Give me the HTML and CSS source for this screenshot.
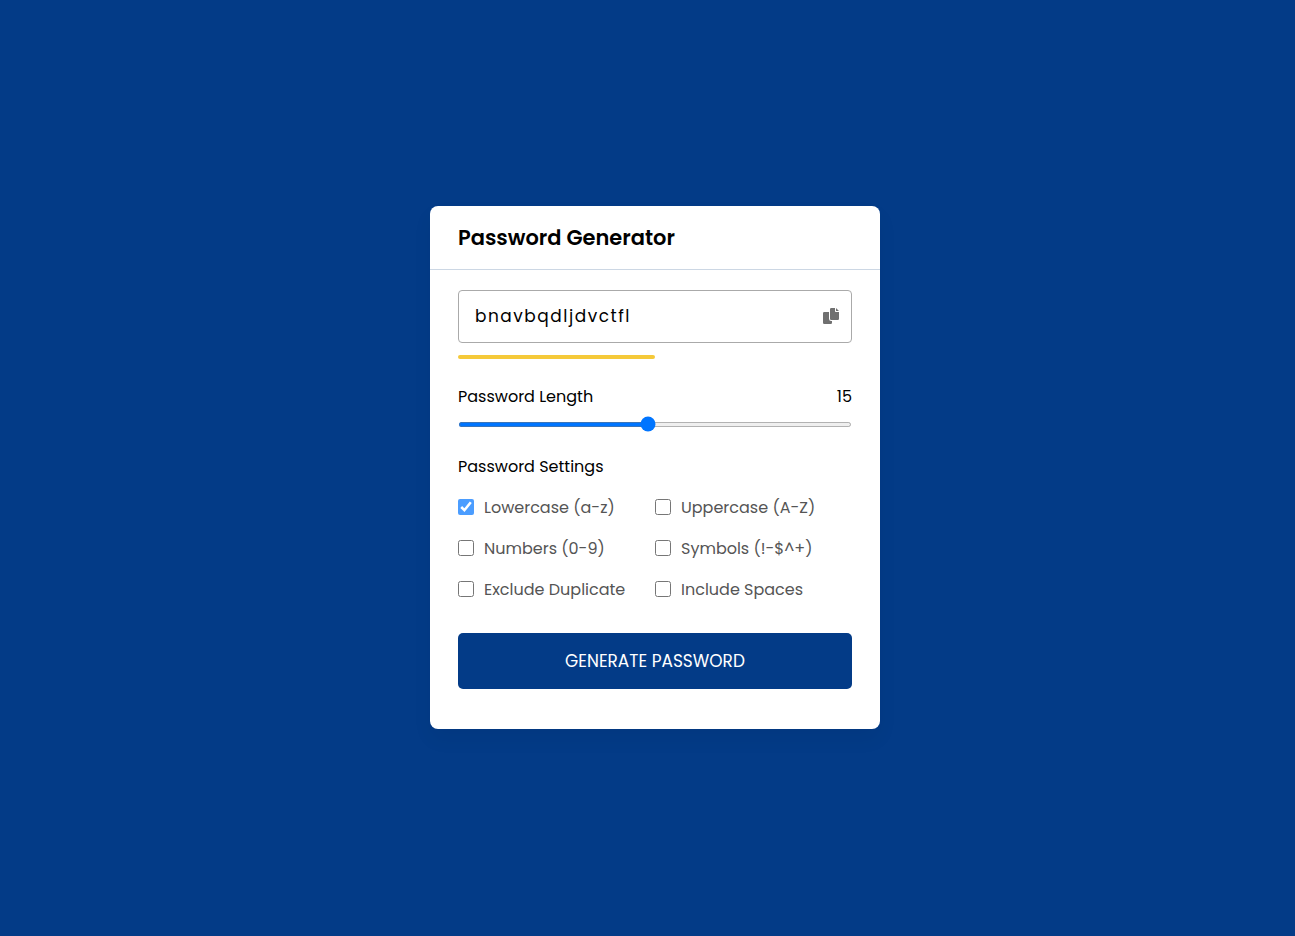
FILE: index.html
```html
<!DOCTYPE html>
<html lang="en">
<head>
<meta charset="utf-8">
<title>Password Generator</title>
<link rel="stylesheet" href="styles.css">
</head>
<body>
<main class="card">
  <h2 class="title">Password Generator</h2>
  <div class="wrapper">
    <div class="input-box">
      <span class="password">bnavbqdljdvctfl</span>
      <svg class="copy" viewBox="0 0 16 16" width="16" height="16" fill="#707070"><path d="M8.200 0H12v3.200a.8.8 0 0 0 .8.8H16v6.800a1.200 1.200 0 0 1-1.200 1.200H8.200A1.200 1.200 0 0 1 7 10.800V1.200A1.200 1.200 0 0 1 8.200 0zM13 0l3 3h-3zM1.200 4H6v6.800A2.200 2.200 0 0 0 8.200 13H9v1.800A1.200 1.200 0 0 1 7.800 16H1.200A1.200 1.200 0 0 1 0 14.800V5.200A1.200 1.200 0 0 1 1.200 4z"/></svg>
    </div>
    <div class="indicator"></div>
    <div class="details"><span class="label">Password Length</span><span class="label">15</span></div>
    <input class="range" type="range" min="1" max="30" value="15">
    <div class="settings"><span class="label">Password Settings</span></div>
    <div class="options">
      <label class="option"><input class="check locked" type="checkbox" checked><span>Lowercase (a-z)</span></label>
      <label class="option"><input class="check" type="checkbox"><span>Uppercase (A-Z)</span></label>
      <label class="option"><input class="check" type="checkbox"><span>Numbers (0-9)</span></label>
      <label class="option"><input class="check" type="checkbox"><span>Symbols (!-$^+)</span></label>
      <label class="option"><input class="check" type="checkbox"><span>Exclude Duplicate</span></label>
      <label class="option"><input class="check" type="checkbox"><span>Include Spaces</span></label>
    </div>
    <button class="generate">GENERATE PASSWORD</button>
  </div>
</main>
</body>
</html>
```

FILE: styles.css
```css
* { box-sizing: border-box; margin: 0; padding: 0; }
body {
  min-height: 936px;
  padding: 206px 0 0 430px;
  background: #033b87;
  font-family: Poppins, Inter, sans-serif;
}
.card {
  width: 450px;
  height: 523px;
  border-radius: 8px;
  background: #fff;
  box-shadow: 0 10px 20px rgba(0, 0, 0, 0.05);
}
.title {
  height: 64px;
  padding: 0 28px;
  border-bottom: 1px solid #ccd7e4;
  font-size: 20.96px;
  font-weight: 600;
  line-height: 63px;
}
.wrapper { display: flex; flex-direction: column; padding: 20px 28px; }
.input-box {
  display: flex;
  align-items: center;
  justify-content: space-between;
  height: 53px;
  padding: 0 12px 1px 16px;
  border: 1px solid #aaa;
  border-radius: 4px;
}
.password { font-size: 16.96px; line-height: 24px; letter-spacing: 1.53px; }
.indicator { width: 50%; height: 4px; margin-top: 12px; border-radius: 4px; background: #f5c939; }
.details { display: flex; justify-content: space-between; height: 24px; margin-top: 26px; }
.label { font-size: 16px; line-height: 24px; }
.range { width: 100%; height: 5px; margin-top: 12.9px; }
.settings { height: 24px; margin-top: 27.2px; }
.options { display: grid; grid-template-columns: 1fr 1fr; row-gap: 17px; margin-top: 17px; }
.option { display: flex; align-items: center; gap: 10px; height: 24px; color: #555; font-size: 16px; line-height: 25px; white-space: nowrap; }
.option span { padding-top: 1px; }
.check { width: 16px; height: 16px; }
.locked { opacity: 0.7; }
.generate {
  height: 56px;
  margin-top: 31.9px;
  border: 0;
  border-radius: 5px;
  background: #033b87;
  color: #fff;
  font: 400 16.96px Poppins, Inter, sans-serif;
}
```
